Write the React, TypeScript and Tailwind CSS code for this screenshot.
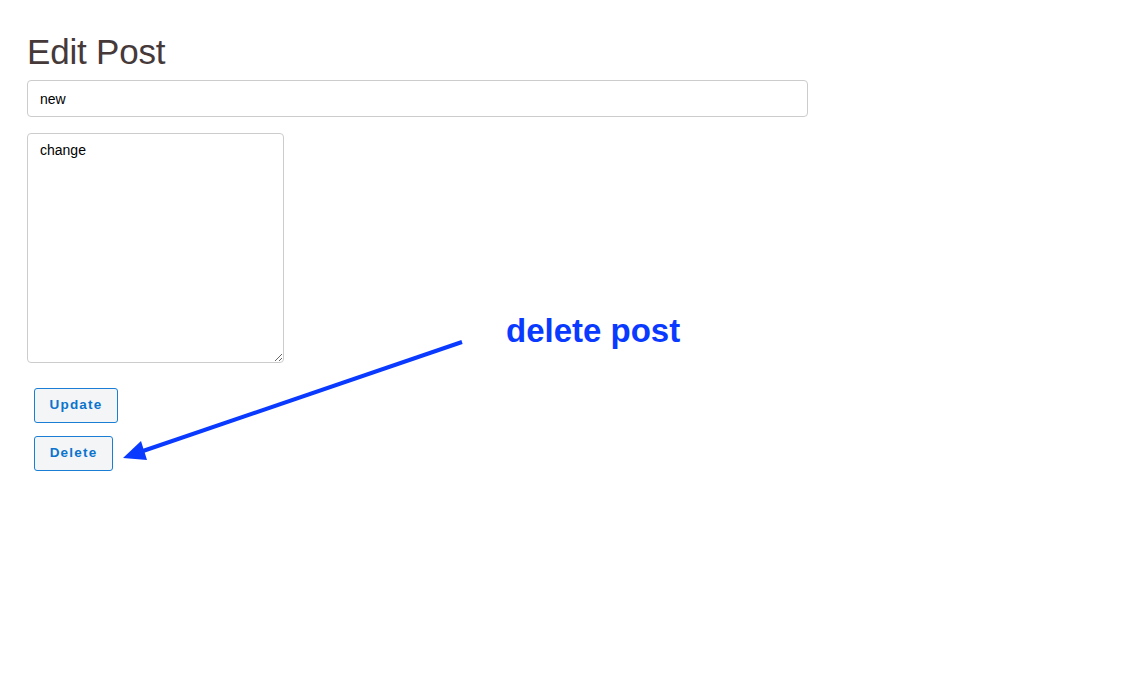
import { FC } from 'react';

const App: FC = () => {
  return (
    <div className="relative min-h-[685px] w-full bg-white font-['Liberation_Sans',Arial,sans-serif]">
      <div className="pl-[27px] pt-[31px]">
        <h1 className="text-[35px] leading-[42px] font-normal text-[#46393a] tracking-[-0.2px]">
          Edit Post
        </h1>

        <form className="mt-[7px] flex flex-col items-start">
          <input
            type="text"
            defaultValue="new"
            className="w-[781px] h-[37px] px-[12px] border border-[#cccccc] rounded-[4px] text-[14px] text-black outline-none"
          />

          <textarea
            defaultValue="change"
            className="mt-[16px] w-[257px] h-[230px] px-[12px] py-[6px] border border-[#cccccc] rounded-[4px] text-[14px] text-black outline-none"
          />

          <div className="ml-[7px] mt-[25px] flex flex-col items-start gap-[13px]">
            <button
              type="button"
              className="h-[35px] w-[84px] rounded-[3px] border border-[#1a7fd4] bg-[#f4f5f7] text-[13.5px] font-bold tracking-[1.2px] text-[#0b74cc]"
            >
              Update
            </button>
            <button
              type="button"
              className="h-[35px] w-[79px] rounded-[3px] border border-[#1a7fd4] bg-[#f4f5f7] text-[13.5px] font-bold tracking-[1.2px] text-[#0b74cc]"
            >
              Delete
            </button>
          </div>
        </form>
      </div>

      {/* annotation over the page */}
      <div className="absolute left-[506px] top-[311px] text-[33px] leading-[1.2] font-bold text-[#0a3aff]">
        delete post
      </div>
      <svg
        className="absolute left-0 top-0 pointer-events-none"
        width="1122"
        height="685"
        viewBox="0 0 1122 685"
      >
        <line x1="462" y1="342" x2="140" y2="452" stroke="#0a3aff" strokeWidth="4" strokeLinecap="butt" />
        <polygon points="123,458 147,460 141,441" fill="#0a3aff" />
      </svg>
    </div>
  );
};

export default App;
